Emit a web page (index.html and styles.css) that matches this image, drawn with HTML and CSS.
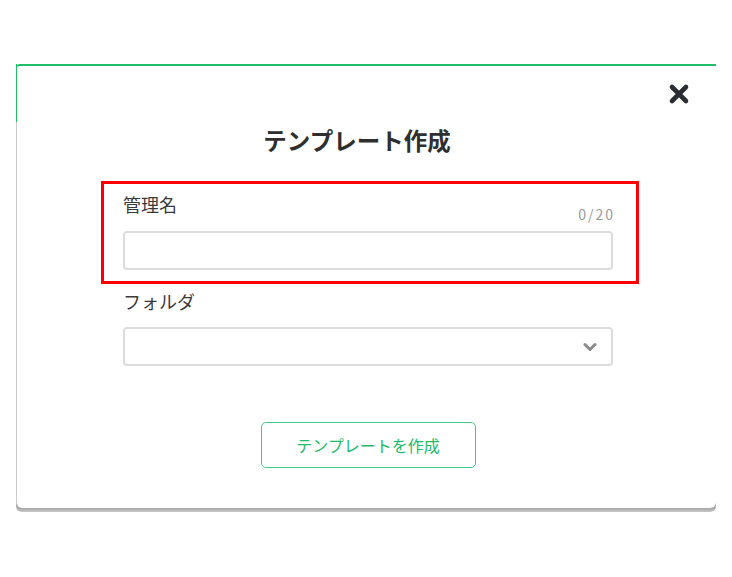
FILE: index.html
```html
<!DOCTYPE html>
<html lang="ja">
<head>
<meta charset="utf-8">
<title>テンプレート作成</title>
<link rel="stylesheet" href="styles.css">
</head>
<body>
<div class="modal">
  <button class="close" aria-label="閉じる">
    <svg width="22" height="22" viewBox="0 0 22 22"><path d="M4 4 L18 18 M18 4 L4 18" stroke="#2a2e33" stroke-width="4.6" stroke-linecap="round" fill="none"/></svg>
  </button>
  <h1 class="title">テンプレート作成</h1>
  <div class="form">
    <div class="field field-highlight">
      <div class="field-head">
        <label class="label">管理名</label>
        <span class="counter">0/20</span>
      </div>
      <input class="input" type="text">
    </div>
    <div class="field field-second">
      <div class="field-head">
        <label class="label label-plain">フォルダ</label>
      </div>
      <div class="select">
        <svg width="14" height="10" viewBox="0 0 14 10"><path d="M2 2.5 L7 7.5 L12 2.5" stroke="#8a8a8a" stroke-width="3" stroke-linecap="round" stroke-linejoin="round" fill="none"/></svg>
      </div>
    </div>
    <div class="actions">
      <button class="btn">テンプレートを作成</button>
    </div>
  </div>
</div>
</body>
</html>
```

FILE: styles.css
```css
html {
  background: #ffffff;
}

html, body {
  margin: 0;
  padding: 0;
  font-family: "Noto Sans CJK JP", "Noto Sans", sans-serif;
  color: #333333;
}

body {
  padding-top: 64px;
  padding-left: 16px;
  min-height: 577px;
  box-sizing: border-box;
}

.modal {
  position: relative;
  box-sizing: border-box;
  width: 700px;
  height: 444px;
  background: #ffffff;
  border-top: 2px solid #1fbf6a;
  border-left: 1px solid #cacaca;
  border-radius: 4px 0 6px 6px;
  padding: 58px 103px 40px 106px;
}

.modal::before {
  content: "";
  position: absolute;
  left: -1px;
  top: -2px;
  width: 1px;
  height: 58px;
  background: #1fbf6a;
}

.modal::after {
  content: "";
  position: absolute;
  left: -1px;
  right: 0;
  bottom: -4px;
  height: 10px;
  border-radius: 0 0 6px 6px;
  background: linear-gradient(to bottom, #b8b8b8, #a6a6a6 60%, #c8c8c8);
  z-index: -1;
}

.close {
  position: absolute;
  top: 17px;
  right: 26px;
  width: 22px;
  height: 22px;
  padding: 0;
  border: 0;
  background: none;
  display: flex;
}

.title {
  margin: 0 0 36px;
  padding-right: 22px;
  font-size: 23.5px;
  line-height: 32px;
  font-weight: 700;
  text-align: center;
  color: #2f2f2f;
}

.form {
  width: 490px;
  display: flex;
  flex-direction: column;
}

.field {
  position: relative;
  display: flex;
  flex-direction: column;
}

.field-highlight::after {
  content: "";
  position: absolute;
  left: -22px;
  top: -11px;
  right: -26px;
  bottom: -14px;
  border: 3px solid #ff0000;
}

.field-second {
  margin-top: 19px;
}

.field-head {
  display: flex;
  justify-content: space-between;
  align-items: flex-end;
  margin-bottom: 9px;
}

.label {
  font-size: 18px;
  line-height: 24px;
  margin-bottom: 6px;
  color: #3a3a3a;
}

.label-plain {
  margin-bottom: 5px;
}

.counter {
  font-size: 14px;
  line-height: 16px;
  letter-spacing: 2px;
  margin-right: -2px;
  color: #9a9a9a;
}

.input,
.select {
  box-sizing: border-box;
  width: 490px;
  height: 39px;
  border: 2px solid #dcdcdc;
  border-radius: 4px;
  background: #ffffff;
  margin: 0;
  padding: 0 12px;
  font: inherit;
}

.select {
  display: flex;
  align-items: center;
  justify-content: flex-end;
  padding-right: 14px;
}

.actions {
  display: flex;
  justify-content: center;
  margin-top: 56px;
}

.btn {
  box-sizing: border-box;
  width: 215px;
  height: 46px;
  border: 1.5px solid #3fcd86;
  border-radius: 5px;
  background: #ffffff;
  color: #22bb6a;
  font-family: "Noto Sans CJK JP", "Noto Sans", sans-serif;
  font-size: 16px;
  padding: 0;
}
```
